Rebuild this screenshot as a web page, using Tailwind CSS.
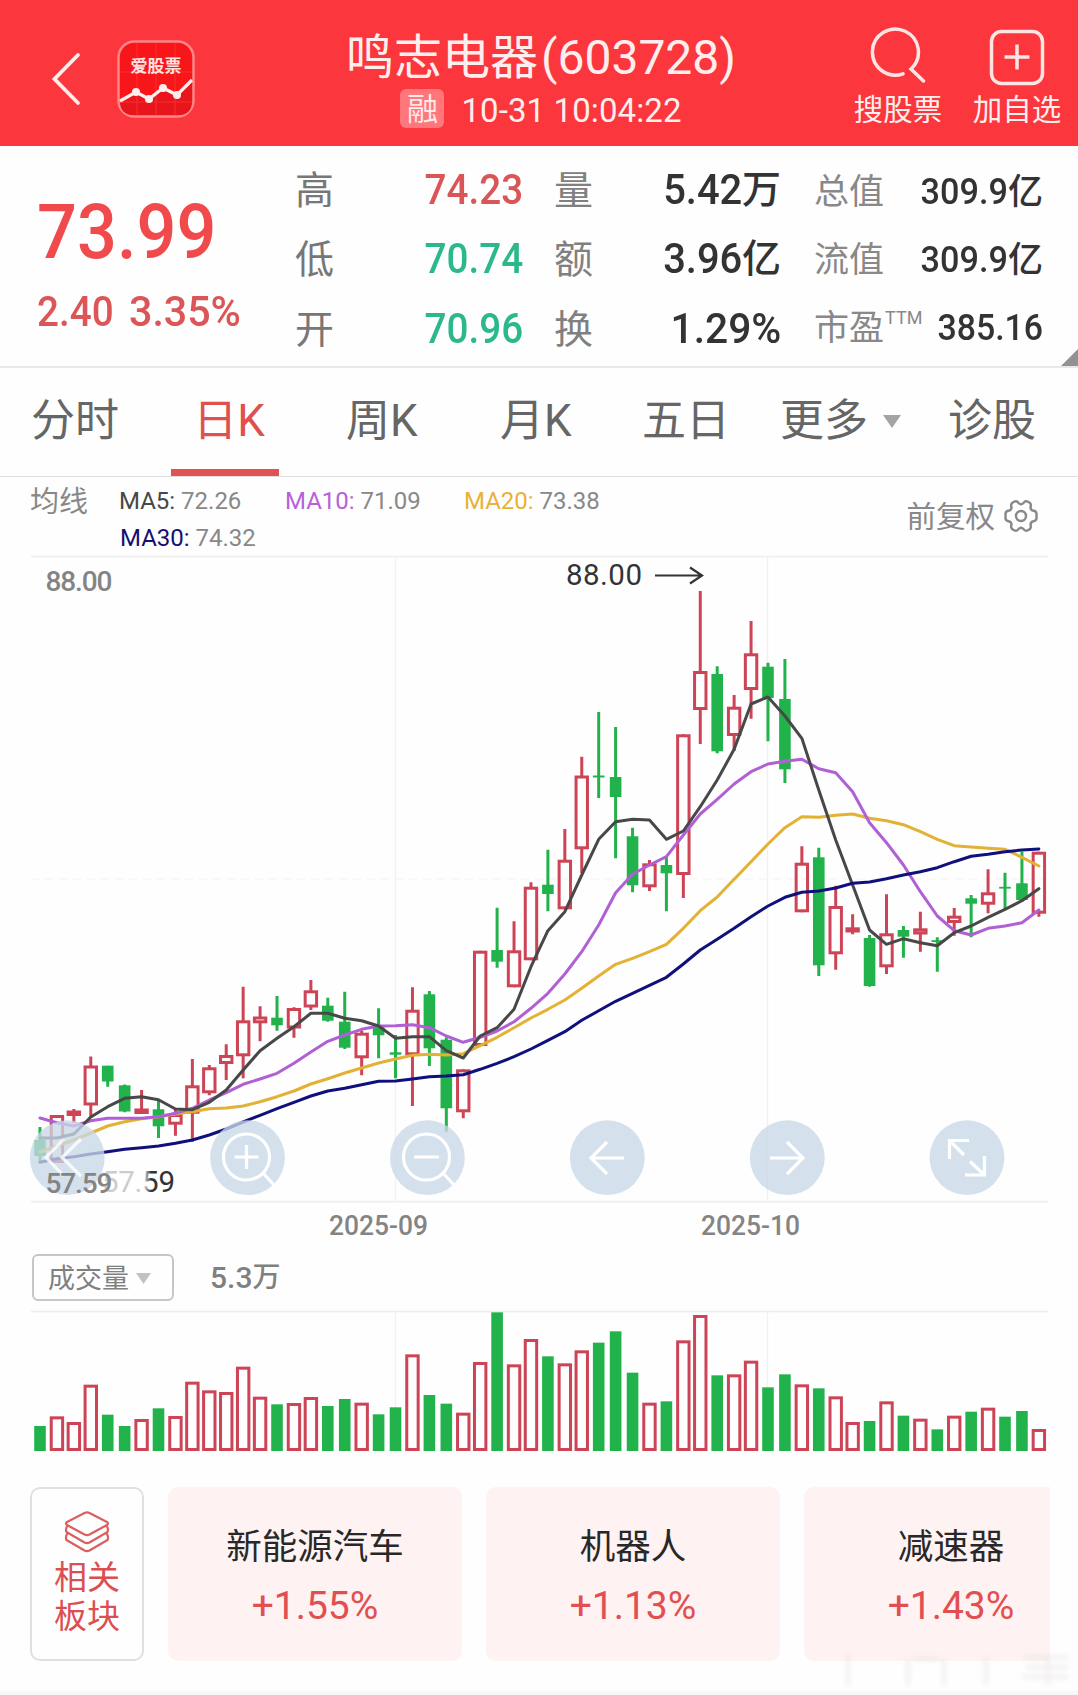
<!DOCTYPE html>
<html lang="zh-CN">
<head>
<meta charset="utf-8">
<title>鸣志电器(603728)</title>
<script src="https://cdn.jsdelivr.net/npm/@tailwindcss/browser@4"></script>
</head>
<body class="bg-white">
<div class="relative flex h-[1695px] w-[1078px] flex-col overflow-hidden bg-[#fefefe] font-['Roboto','Noto_Sans_CJK_SC',sans-serif] leading-none whitespace-nowrap">

  <!-- Title bar -->
  <header class="grid h-[146px] shrink-0 grid-cols-[346px_1fr_342px] bg-[#fb363d] text-[#ffeeee]">
    <div class="flex items-start pt-10 pl-[50px]">
      <svg class="mt-3 h-[54px] w-8" viewBox="0 0 32 54" fill="none" stroke="#ffeeee" stroke-width="3.8"><path d="M28 3 4.500 27 28 51" stroke-linecap="round"/></svg>
      <svg class="ml-[35px] h-[78px] w-[78px]" viewBox="0 0 78 78">
        <rect x="1.500" y="1.500" width="75" height="75" rx="16" fill="#f8161b" stroke="#ff8587" stroke-width="2.500"/>
        <path d="M3 62 19 52l13 8 14-10 14 8 15-17v20q0 14-14 14H17Q3 75 3 61z" fill="#e9151c"/>
        <path d="M20 3v72M39 3v72M58 3v72M3 32h72M3 62h72" stroke="#ff4a3c" stroke-width="1" opacity=".5"/>
        <path d="M3 61 19 52l13 7 14-11 14 7 15-15" fill="none" stroke="#fff0f0" stroke-width="3.200"/>
        <g fill="#fff0f0"><circle cx="19" cy="52" r="4"/><circle cx="32" cy="59" r="4"/><circle cx="46" cy="48" r="4"/><circle cx="60" cy="55" r="4"/></g>
        <text x="39" y="32" text-anchor="middle" font-size="17" font-weight="700" fill="#ffe2e0">爱股票</text>
      </svg>
    </div>
    <div class="flex flex-col items-center pt-[34px]">
      <h1 class="h-12 pr-[4px] text-[48px] leading-[48px]">鸣志电器<span class="ml-[3px]">(603728)</span></h1>
      <div class="mt-[7px] flex items-center gap-[17px] pr-[4px]">
        <span class="flex h-[39px] w-11 items-center justify-center rounded-md bg-[#ff777b] pt-px text-[31px] text-[#ffe9e9]">融</span>
        <span class="pt-1 text-[33px] tracking-[0.1px]">10-31 10:04:22</span>
      </div>
    </div>
    <div class="flex gap-[29px] pt-[27px] pl-[113px] text-[29.500px]">
      <div class="flex w-[90px] flex-col items-center">
        <svg class="h-[60px] w-[60px]" viewBox="0 0 60 60" fill="none" stroke="#ffe4e4" stroke-width="3.500" stroke-linecap="round"><path d="M35 46.800A23 23 0 1 1 43 42L55.500 54"/></svg>
        <span class="mt-[9px]">搜股票</span>
      </div>
      <div class="flex w-[90px] flex-col items-center">
        <svg class="h-[60px] w-[60px]" viewBox="0 0 60 60" fill="none" stroke="#ffe4e4" stroke-width="3.500"><rect x="4.500" y="4.500" width="51" height="52" rx="10"/><path d="M17.500 30h25M30 17.500v25"/></svg>
        <span class="mt-[9px]">加自选</span>
      </div>
    </div>
  </header>

  <!-- Quote summary -->
  <section class="relative flex h-[222px] shrink-0 border-b-2 border-[#e8e8e8] pl-9">
    <div class="w-[259px]">
      <div class="mt-[48px] ml-px origin-left scale-x-[.925] text-[76px] font-medium text-[#f04a4c]">73.99</div>
      <div class="mt-[21px] ml-px flex text-[42px] font-medium text-[#dc5557]"><span class="w-[92px] origin-left scale-x-[.92]">2.40</span><span class="origin-left scale-x-[.98]">3.35%</span></div>
    </div>
    <div class="grid w-[228px] grid-cols-[1fr_auto] grid-rows-[repeat(3,69.500px)] items-center pt-[9px] text-[42px] font-medium">
      <span class="pt-[3px] text-[39px] font-normal text-[#777]">高</span><span class="origin-right scale-x-[.92] text-[#da5558]">74.23</span>
      <span class="pt-[3px] text-[39px] font-normal text-[#777]">低</span><span class="origin-right scale-x-[.92] text-[#2bb88c]">70.74</span>
      <span class="pt-[3px] text-[39px] font-normal text-[#777]">开</span><span class="origin-right scale-x-[.92] text-[#2bb88c]">70.96</span>
    </div>
    <div class="ml-[31px] grid w-[227px] grid-cols-[1fr_auto] grid-rows-[repeat(3,69.500px)] items-center pt-[9px] text-[42px] font-medium text-[#333]">
      <span class="pt-[3px] text-[39px] font-normal text-[#808080]">量</span><span class="flex items-center justify-end"><span class="origin-right scale-x-[.95]">5.42</span><span class="pt-px text-[39px]">万</span></span>
      <span class="pt-[3px] text-[39px] font-normal text-[#808080]">额</span><span class="flex items-center justify-end"><span class="origin-right scale-x-[.95]">3.96</span><span class="pt-px text-[39px]">亿</span></span>
      <span class="pt-[3px] text-[39px] font-normal text-[#808080]">换</span><span class="origin-right scale-x-[.97] text-right">1.29%</span>
    </div>
    <div class="ml-[33px] grid w-[229px] grid-cols-[96px_133px] grid-rows-[repeat(3,68px)] items-center pt-3 text-[36px] font-medium text-[#333]">
      <span class="pt-px text-[35px] font-normal text-[#888]">总值</span><span class="flex items-center justify-end"><span class="origin-right scale-x-[.95]">309.9</span><span class="pt-px text-[35px]">亿</span></span>
      <span class="pt-px text-[35px] font-normal text-[#888]">流值</span><span class="flex items-center justify-end"><span class="origin-right scale-x-[.95]">309.9</span><span class="pt-px text-[35px]">亿</span></span>
      <span class="flex items-start text-[35px] font-normal text-[#888]">市盈<span class="-mt-[2px] ml-px text-[18px]">TTM</span></span><span class="origin-right scale-x-[.94] text-right">385.16</span>
    </div>
    <svg class="absolute right-0 bottom-0 h-[17px] w-[17px]" viewBox="0 0 17 17"><path d="M17 0v17H0z" fill="#929292"/></svg>
  </section>

  <!-- Period tabs -->
  <nav class="flex h-[109px] shrink-0 items-stretch border-b border-[#dedede] pt-[3px] text-[44px] text-[#666]">
    <span class="ml-[31px] flex w-[139px] items-center pb-[5px]">分时</span>
    <span class="ml-px flex w-[108px] flex-col items-center justify-between pt-[28px] text-[#e0504f]"><span class="pl-2">日K</span><i class="h-[7px] w-[108px] bg-[#e05254]"></i></span>
    <span class="ml-[67px] flex w-[154px] items-center pb-[5px]">周K</span>
    <span class="flex w-[142px] items-center pb-[5px]">月K</span>
    <span class="flex w-[138px] items-center pb-[5px]">五日</span>
    <span class="flex w-[168px] items-center gap-[15px] pb-[5px]">更多<svg class="h-[13px] w-[18px]" viewBox="0 0 18 13"><path d="M0 0h18L9 13z" fill="#a4a4a4"/></svg></span>
    <span class="flex items-center pb-[5px]">诊股</span>
  </nav>

  <!-- Moving-average legend -->
  <section class="flex h-[78px] shrink-0 justify-between pl-[30px] text-2xl text-[#888]">
    <div class="flex pt-[7px]">
      <span class="-mt-px w-[89px] text-[29px]">均线</span>
      <div class="grid auto-rows-[37px] grid-cols-[166px_179px_auto] pt-px">
        <span><b class="font-normal text-[#484848]">MA5:</b> 72.26</span>
        <span><b class="font-normal text-[#b661d9]">MA10:</b> 71.09</span>
        <span><b class="font-normal text-[#e8b236]">MA20:</b> 73.38</span>
        <span class="pl-px"><b class="font-normal text-[#15106f]">MA30:</b> 74.32</span>
      </div>
    </div>
    <div class="flex items-start gap-[9px] pt-[22px] pr-[40px] text-[29.500px]">
      <span class="-mt-px">前复权</span>
      <svg class="h-[34px] w-[34px]" viewBox="0 0 34 34" fill="none" stroke="#888" stroke-width="2.400" stroke-linejoin="round"><circle cx="17" cy="17" r="5"/><path d="M10.500 2.500 Q13 1.500 14.500 4 Q17 6.500 19.500 4 Q21 1.500 23.500 2.500 L26 4 Q27.500 6 26.500 8 Q26.500 11.500 29.500 11.800 Q32 12 32.500 14.500 V19.500 Q32 22 29.500 22.200 Q26.500 22.500 26.500 26 Q27.500 28 26 30 L23.500 31.500 Q21 32.500 19.500 30 Q17 27.500 14.500 30 Q13 32.500 10.500 31.500 L8 30 Q6.500 28 7.500 26 Q7.500 22.500 4.500 22.200 Q2 22 1.500 19.500 V14.500 Q2 12 4.500 11.800 Q7.500 11.500 7.500 8 Q6.500 6 8 4Z"/></svg>
    </div>
  </section>

  <!-- Candlestick chart -->
  <svg class="h-[695px] w-[1078px] shrink-0" viewBox="0 555 1078 695">
    <defs><linearGradient id="fade" gradientUnits="userSpaceOnUse" x1="100" x2="180" y1="0" y2="0"><stop offset="0" stop-color="#ccc"/><stop offset=".56" stop-color="#ccc"/><stop offset=".64" stop-color="#333"/></linearGradient></defs>
    <g stroke="#f1f1f1" stroke-width="2">
      <path d="M31 556.500H1048M31 1201.700H1048"/>
      <path d="M395.500 557V1201M767.500 557V1201" stroke-width="1.300"/>
      <path d="M31 879H1048" stroke-width="1" stroke-dasharray="8 6"/>
    </g>
    <g id="candles" stroke-width="3"></g>
    <g id="averages" fill="none" stroke-width="3" stroke-linejoin="round" stroke-linecap="round"></g>
    <text x="566" y="585" font-size="29.500" textLength="76" fill="#333">88.00</text>
    <path d="M655 575.500H701M690 567.500l12 8-12 8" fill="none" stroke="#333" stroke-width="2.200"/>
    <g id="tools" fill="#c8d8e8" fill-opacity=".78"></g>
    <text x="102" y="1191.500" font-size="29.500" textLength="73" fill="url(#fade)">57.59</text>
    <g fill="none" stroke="#fff" stroke-width="3.200">
      <path d="M64 1139 46 1157.500 64 1176M81 1139 62 1157.500 81 1176" stroke-opacity=".8"/>
      <circle cx="246.500" cy="1157" r="23"/><path d="M234.500 1157h24M246.500 1145v24M263 1173l11 12"/>
      <circle cx="426.500" cy="1157" r="23"/><path d="M414 1157h25M443 1173l11 12"/>
      <path d="M624 1158H591M607 1142l-16 16 16 16"/>
      <path d="M770 1158H803M787 1142l16 16-16 16"/>
      <path d="M949.500 1159V1140.500H969M950 1141l14 14M984.500 1156V1175H965M984 1174.500l-14-13"/>
    </g>
    <g font-size="28" font-weight="500" fill="#848484">
      <text x="45.500" y="590.500" textLength="67">88.00</text>
      <text x="45.500" y="1192.500" textLength="67">57.59</text>
      <text x="329" y="1234.500" textLength="99" lengthAdjust="spacingAndGlyphs">2025-09</text>
      <text x="701" y="1234.500" textLength="99" lengthAdjust="spacingAndGlyphs">2025-10</text>
    </g>
  </svg>

  <!-- Volume selector -->
  <div class="mt-1 flex h-[47px] shrink-0 items-center pl-8 text-[#808080]">
    <div class="flex h-[47px] w-[142px] items-center gap-[7px] rounded-md border-2 border-[#c6c6c6] pl-[14px] text-[27px]"><span class="pt-[3px]">成交量</span><svg class="mt-[2px] h-[11px] w-[15px]" viewBox="0 0 15 11"><path d="M0 0h15l-7.500 11z" fill="#c2c2c2"/></svg></div>
    <div class="ml-9 flex items-center text-[30px] font-medium">5.3<span class="text-[28px]">万</span></div>
  </div>

  <!-- Volume bars -->
  <svg class="mt-2 h-[144px] w-[1078px] shrink-0" viewBox="0 1309 1078 144">
    <path d="M31 1311.500H1048" stroke="#ececec" stroke-width="1.300"/>
    <path d="M395.500 1312V1450M767.500 1312V1450" stroke="#f1f1f1" stroke-width="1.300"/>
    <g id="volumes" stroke-width="3"></g>
  </svg>

  <!-- Related sectors -->
  <section class="mt-[34px] flex h-[174px] shrink-0 pr-7 pl-[30px]">
    <div class="flex w-[114px] shrink-0 flex-col items-center rounded-[10px] border-2 border-[#e0e0e0] pt-[21px] text-[33px] text-[#dc4f50]">
      <svg class="h-[43px] w-[46px]" viewBox="0 0 46 43" fill="none" stroke="#dc5f60" stroke-width="2.200" stroke-linejoin="round"><path d="M20.500 3q2.500-1.200 5 0L43 12q2 1.500 0 3L25.500 24.500q-2.500 1.200-5 0L3 15q-2-1.500 0-3zM4 15.500Q1 18 2.500 22L20.500 32.500q2.500 1.200 5 0L43.500 22Q45 18 42 15.500M3.500 23.500Q1 26.500 2.500 30L20.500 40.500q2.500 1.200 5 0L43.500 30Q45 26.500 42.500 23.500"/></svg>
      <span class="mt-[5px] text-center leading-[39px]">相关<br>板块</span>
    </div>
    <div class="ml-6 flex gap-6 overflow-hidden text-[35.500px] text-[#282828]">
      <div class="flex w-[294px] shrink-0 flex-col items-center rounded-[10px] bg-[#fef2f2] pt-[43px]">新能源汽车<span class="mt-[21px] text-[39px] text-[#e24f51]">+1.55%</span></div>
      <div class="flex w-[294px] shrink-0 flex-col items-center rounded-[10px] bg-[#fef2f2] pt-[43px]">机器人<span class="mt-[21px] text-[39px] text-[#e24f51]">+1.13%</span></div>
      <div class="flex w-[294px] shrink-0 flex-col items-center rounded-[10px] bg-[#fef2f2] pt-[43px]">减速器<span class="mt-[21px] text-[39px] text-[#e24f51]">+1.43%</span></div>
    </div>
  </section>
  <div class="mt-auto h-1 shrink-0 bg-[#f7f7f7]"></div>

  <!-- Faded corner mark -->
  <svg class="absolute right-1 bottom-2 h-[36px] w-[240px] blur-[2px]" viewBox="0 0 240 36" fill="none" stroke="#e9e3e3" stroke-opacity=".45" stroke-width="5"><path d="M14 4V34M74 8V34M80 8H104M110 8V34M152 6V34M190 6H234M192 16H234M188 26H234M214 4V34"/></svg>
</div>

<script>
const X0 = 40, STEP = 16.93, RED = '#cc4455', GREEN = '#22b24c';
const x = i => X0 + i * STEP;
// direction, high, body top, body bottom, low
const candles = [
['G',1127,1140,1156,1163],['R',1115,1115,1163,1163],['R',1109,1110.5,1116,1123],['R',1056.5,1065.5,1105.5,1118],['G',1065.7,1065.7,1081.5,1086.7],
['G',1084.5,1085.3,1111.5,1112.3],['R',1090,1108.5,1114,1114],['G',1101,1109.3,1126.3,1138],['R',1110,1114,1124.7,1135.7],['R',1059,1085.3,1113.7,1141.7],
['R',1065,1067.3,1093.3,1095.3],['R',1044.3,1055,1064,1080],['R',986.7,1020.3,1056.3,1078.3],['R',1006.3,1016.5,1023.3,1041.3],['G',996,1017.7,1025.3,1030.7],
['R',1007.3,1008,1028.5,1037.7],['R',980,990.3,1007.5,1010],['G',997.7,1005.7,1020.7,1021.7],['G',991.7,1021.7,1047.7,1049],['R',1030.7,1032.7,1058.3,1075.3],
['G',1008.3,1026.7,1035.3,1058.3],['G',1035,1052.3,1054.7,1078.3],['R',987.3,1009.7,1055.3,1106],['G',991,994.3,1048.3,1066],['G',1037.3,1039.7,1108.3,1131.7],
['R',1069.3,1069.3,1112.3,1118.3],['R',950.7,950.7,1046,1046],['G',907.7,950,961.7,967.7],['R',921.3,950.3,987.3,987.3],['R',882.3,886.7,960.3,960.3],
['G',849.7,884.7,894,911.3],['R',829,859.7,909.3,909.3],['R',756.7,775.5,849.3,873],['G',712,775.5,777.5,798],['G',727,777,797,858.3],
['G',827.7,836.3,885.3,892.3],['R',860,863.3,887.3,891],['G',856.7,865,873.3,911.3],['R',734.3,734.3,875,898],['R',591,671,710,744],
['G',666.3,674,751.3,753.3],['R',695,706.7,736,751],['R',621,653.3,690,718.7],['G',662.7,666.7,698,741.3],['G',659,699,769.3,783],
['R',846.3,862.7,912.3,912.3],['G',847.7,857.3,965.3,976],['R',885.7,906,954.3,969.7],['R',914.3,927.3,932.5,934.3],['G',935,938,986,986.7],
['R',894.3,933.3,967.3,974],['G',926,930,936.7,957.7],['R',911.7,928.3,934.5,951.7],['G',937.3,940.2,942,971.7],['R',908,915.7,923,935.7],
['G',895,898.3,903.7,937.3],['R',869.3,892.3,904.7,913.3],['G',872.7,886.8,888.6,909],['G',851.7,883.3,900,901.7],['R',851.7,851.7,913.7,916.7]];
const averages = [
['#e3b133',[1152,1146,1140,1133,1126,1121.7,1118.7,1116.7,1114,1111.7,1108.7,1108,1106,1101.7,1096.7,1091,1084,1078.7,1073,1068,1063,1059,1055.3,1054.3,1055,1053.7,1045.7,1037.3,1027.7,1018,1009.3,1000,988.3,976,964.3,958.3,951.7,944.3,928.3,910.7,897,879.3,861.7,844,827.7,816.7,817.3,815.3,814,818.3,820.7,824.7,831.7,839.3,845.7,847,848.3,849.3,857.3,866]],
['#b060d4',[1118,1122.7,1126,1120.7,1118.3,1118.3,1118.3,1116.7,1113.3,1108.3,1100,1092.7,1084.3,1079,1073.3,1063.3,1052,1041.3,1035,1029.3,1026,1025.7,1024.7,1027.7,1036,1042.3,1037.3,1031,1021.7,1008.3,993.3,974,951.7,925,892.7,874.3,865,856.7,835,814,799.3,784,771.7,764,761.3,759.3,768.7,772.7,791.7,822.7,842.7,865,891.7,916,930.7,935,928.3,926,922.7,910]],
['#484848',[1138,1138,1134,1117,1106.7,1098.3,1096.7,1099.7,1109,1109.7,1102.3,1090,1070,1050.7,1038.3,1026.7,1013.3,1013.3,1018.3,1020.7,1026,1038.3,1036.7,1036.7,1050.7,1058,1036,1027.7,1009.3,966.7,930.7,911.7,875,839.3,821.7,819.3,820,839.3,831,806.7,780,749.3,704,697,716,738.3,790,840,885,930,944.3,938.7,942.7,945.7,932.7,926,917.3,909.3,900.7,888.7]],
['#10107c',[1162.3,1158.7,1156.7,1154,1151.7,1149.3,1147.7,1146,1143.3,1140,1135,1129,1122,1115.3,1108.7,1102.3,1096,1091,1088.3,1084.7,1081.3,1081,1079,1076.7,1076,1074.7,1069.3,1063.3,1056.7,1049,1040.3,1031.7,1020.3,1010.7,1001.3,993.3,985.3,977.3,964,950,939.3,928.3,916.7,906,897.3,892.3,891,888,883.3,882,878.7,875,871.7,867.7,861.7,856.3,854.3,851.7,850,849]]];
const volumeHeights = [588,559,576,464,554,588,567,535,558,455,481,486,410,500,523,519,501,528,507,518,553,532,373,495,521,548,396,247,403,327,379,400,361,338,304,428,518,514,331,255,436,433,392,472,433,463,475,499,576,573,514,557,566,598,557,545,533,560,543,597].map(v => (663 - v) / 3);

const body = (dir, cx, top, bottom) => dir === 'G'
  ? `<rect x="${cx - 5.8}" y="${top}" width="11.6" height="${bottom - top}" fill="${GREEN}"/>`
  : `<rect x="${cx - 5.7}" y="${top + 1.5}" width="11.4" height="${Math.max(bottom - top - 3, .5)}" fill="none" stroke="${RED}"/>`;

document.getElementById('candles').innerHTML = candles.map(([d, h, t, b, l], i) => {
  const c = d === 'G' ? GREEN : RED;
  return `<path d="M${x(i)} ${h}V${t + 1}M${x(i)} ${b - 1}V${l}" stroke="${c}"/>` + body(d, x(i), t, b);
}).join('');
document.getElementById('averages').innerHTML = averages.map(([c, ys]) =>
  `<polyline stroke="${c}" points="${ys.map((y, i) => x(i) + ',' + y).join(' ')}"/>`).join('');
document.getElementById('volumes').innerHTML = volumeHeights.map((h, i) => body(candles[i][0], x(i), 1451 - h, 1451)).join('');
document.getElementById('tools').innerHTML = [67.3, 247.5, 427.4, 607.3, 787.3, 967].map(cx => `<circle cx="${cx}" cy="1157.7" r="37.4"/>`).join('');
</script>
</body>
</html>
